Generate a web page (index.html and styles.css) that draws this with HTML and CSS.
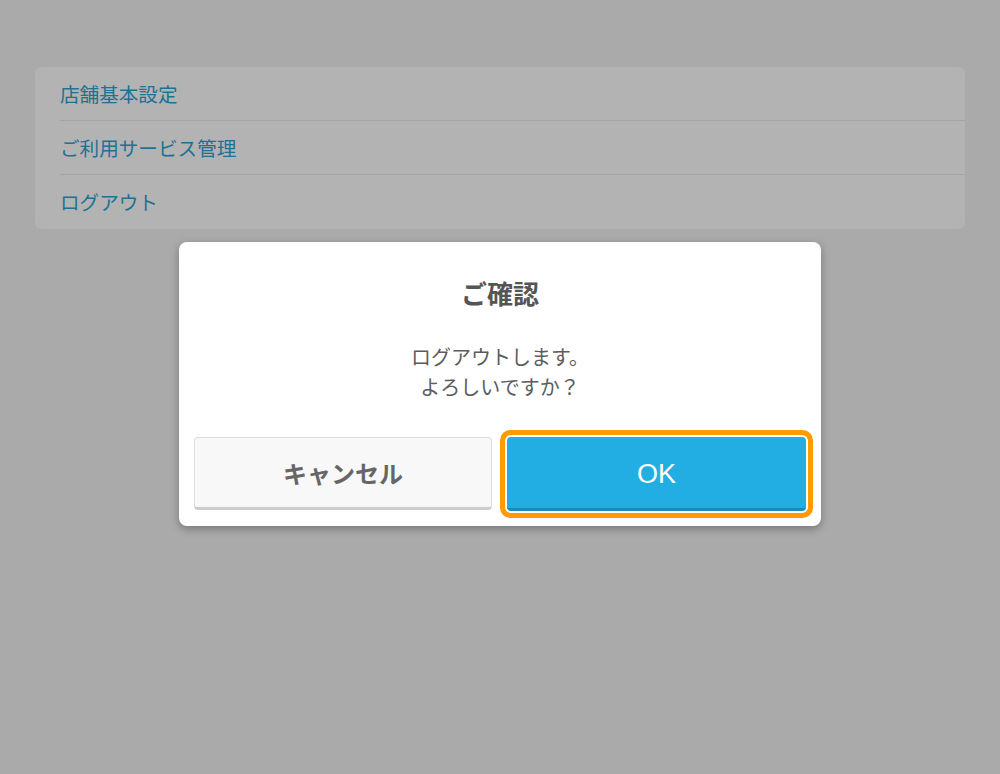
FILE: index.html
```html
<!DOCTYPE html>
<html lang="ja">
<head>
<meta charset="utf-8">
<link rel="stylesheet" href="styles.css">
</head>
<body>
<div class="page">
  <ul class="menu">
    <li class="menu-item">店舗基本設定</li>
    <li class="menu-item">ご利用サービス管理</li>
    <li class="menu-item">ログアウト</li>
  </ul>
  <div class="dialog">
    <h2 class="dialog-title">ご確認</h2>
    <p class="dialog-msg">ログアウトします。<br>よろしいですか？</p>
    <div class="dialog-actions">
      <button class="btn btn-cancel">キャンセル</button>
      <button class="btn btn-ok">OK</button>
    </div>
  </div>
</div>
</body>
</html>
```

FILE: styles.css
```css
html, body {
  margin: 0;
  padding: 0;
  background: #aaaaaa;
  font-family: "Liberation Sans", "Noto Sans CJK JP", sans-serif;
}
.page {
  width: 1000px;
  height: 774px;
  padding-top: 67px;
  box-sizing: border-box;
}
.menu {
  list-style: none;
  margin: 0 0 0 35px;
  padding: 0;
  width: 930px;
  background: #b3b3b3;
  border-radius: 6px;
}
.menu-item {
  margin-left: 25px;
  height: 54px;
  line-height: 56px;
  font-size: 19.6px;
  color: #1d7193;
  border-bottom: 1px solid #a4a4a4;
  box-sizing: border-box;
}
.menu-item:last-child {
  border-bottom: none;
}
.dialog {
  width: 642px;
  margin: 13px auto 0;
  background: #ffffff;
  border-radius: 8px;
  box-shadow: 0 3px 8px rgba(0, 0, 0, 0.3);
  padding: 38px 15px 15px;
  box-sizing: border-box;
  text-align: center;
}
.dialog-title {
  margin: 0;
  font-size: 26px;
  line-height: 30px;
  font-weight: bold;
  color: #555555;
}
.dialog-msg {
  margin: 33px 0 0;
  font-size: 20px;
  line-height: 30px;
  color: #5c5c5c;
}
.dialog-actions {
  margin-top: 34px;
  display: grid;
  grid-template-columns: 298px 299px;
  gap: 15px;
}
.btn {
  height: 73px;
  border-radius: 4px;
  font-family: "Liberation Sans", "Noto Sans CJK JP", sans-serif;
  cursor: pointer;
  padding: 0;
  box-sizing: border-box;
}
.btn-cancel {
  background: #f8f8f8;
  border: 1px solid #dddddd;
  border-bottom: 3px solid #cccccc;
  color: #666666;
  font-size: 24px;
  font-weight: bold;
}
.btn-ok {
  height: 74px;
  padding-top: 4px;
  background: #22aee3;
  border: none;
  border-bottom: 3px solid #1a8bbb;
  color: #ffffff;
  font-size: 27px;
  font-weight: normal;
  box-shadow: 0 0 0 2px #ffffff, 0 0 0 7px #ff9a00;
}
```
